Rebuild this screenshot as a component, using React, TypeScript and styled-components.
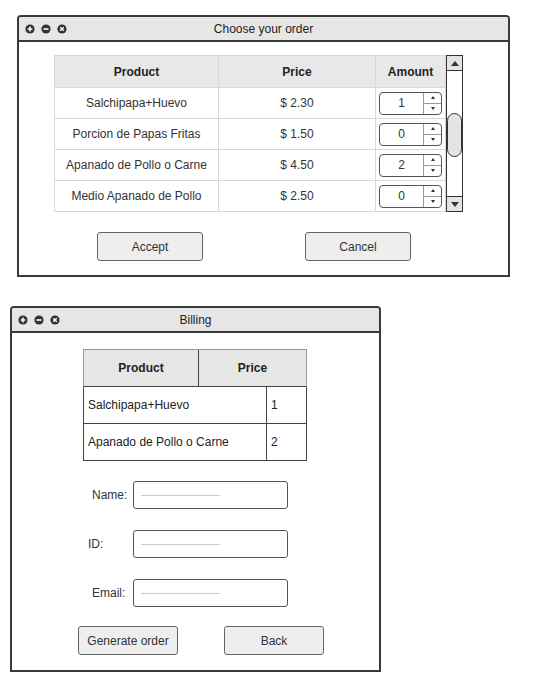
import React from "react";
import styled, { createGlobalStyle } from "styled-components";

const GlobalStyle = createGlobalStyle`
  body {
    margin: 0;
    background: #fff;
    font-family: "Liberation Sans", Arial, sans-serif;
    font-size: 12px;
    color: #333;
  }
`;

const Page = styled.div`
  display: flex;
  flex-direction: column;
  padding-top: 15px;
`;

const Window = styled.section<{ $left: number; $width: number; $height: number; $top?: number }>`
  box-sizing: border-box;
  margin-left: ${(p) => p.$left}px;
  margin-top: ${(p) => p.$top ?? 0}px;
  width: ${(p) => p.$width}px;
  height: ${(p) => p.$height}px;
  border: 2px solid #3a3a3a;
  border-radius: 4px 4px 0 0;
  display: flex;
  flex-direction: column;
  background: #fff;
`;

const TitleBar = styled.header`
  height: 23px;
  background: #e6e6e6;
  border-bottom: 2px solid #3a3a3a;
  border-radius: 2px 2px 0 0;
  display: grid;
  grid-template-columns: 1fr auto 1fr;
  align-items: center;
`;

const Controls = styled.div`
  display: flex;
  gap: 6px;
  padding-left: 6px;
`;

const Title = styled.span`
  color: #222;
  font-size: 12px;
`;

type ControlKind = "plus" | "minus" | "close";

function ControlDot({ kind }: { kind: ControlKind }) {
  return (
    <svg width="10" height="10" viewBox="0 0 10 10">
      <circle cx="5" cy="5" r="4.6" fill="#333" />
      {kind === "plus" && (
        <path d="M5 2.6V7.4M2.6 5H7.4" stroke="#fff" strokeWidth="1.5" />
      )}
      {kind === "minus" && <path d="M2.5 5H7.5" stroke="#fff" strokeWidth="1.6" />}
      {kind === "close" && (
        <path d="M3.2 3.2L6.8 6.8M6.8 3.2L3.2 6.8" stroke="#fff" strokeWidth="1.4" />
      )}
    </svg>
  );
}

function WindowHeader({ title }: { title: string }) {
  return (
    <TitleBar>
      <Controls>
        <ControlDot kind="plus" />
        <ControlDot kind="minus" />
        <ControlDot kind="close" />
      </Controls>
      <Title>{title}</Title>
      <span />
    </TitleBar>
  );
}

/* ---------- order window ---------- */

const OrderBody = styled.div`
  padding: 13px 0 0 35px;
  display: flex;
  flex-direction: column;
`;

const TableArea = styled.div`
  display: flex;
  align-items: flex-start;
`;

const OrderTable = styled.table`
  border-collapse: collapse;
  width: 388px;
  table-layout: fixed;
`;

const Th = styled.th<{ $w: number }>`
  width: ${(p) => p.$w}px;
  height: 31px;
  padding: 0;
  background: #e8e8e8;
  border: 1px solid #d8d8d8;
  font-weight: bold;
  font-size: 12px;
  color: #222;
  text-align: center;
`;

const Td = styled.td`
  height: 30px;
  padding: 0;
  border: 1px solid #d8d8d8;
  font-size: 12px;
  color: #333;
  text-align: center;
`;

const Spinner = styled.div`
  box-sizing: border-box;
  margin: 0 auto;
  width: 63px;
  height: 23px;
  border: 1px solid #555;
  border-radius: 4px;
  display: flex;
  background: #fff;
`;

const SpinValue = styled.span`
  flex: 1;
  display: flex;
  align-items: center;
  justify-content: center;
  color: #333;
`;

const SpinArrows = styled.div`
  width: 17px;
  border-left: 1px solid #999;
  display: flex;
  flex-direction: column;
`;

const SpinHalf = styled.div<{ $down?: boolean }>`
  flex: 1;
  display: flex;
  align-items: center;
  justify-content: center;
  border-top: ${(p) => (p.$down ? "1px solid #999" : "none")};
`;

const Tri = styled.span<{ $down?: boolean; $size: number }>`
  width: 0;
  height: 0;
  border-left: ${(p) => p.$size}px solid transparent;
  border-right: ${(p) => p.$size}px solid transparent;
  ${(p) =>
    p.$down
      ? `border-top: ${p.$size + 1}px solid #333;`
      : `border-bottom: ${p.$size + 1}px solid #333;`}
`;

function NumberSpinner({ value }: { value: number }) {
  return (
    <Spinner>
      <SpinValue>{value}</SpinValue>
      <SpinArrows>
        <SpinHalf>
          <Tri $size={2} />
        </SpinHalf>
        <SpinHalf $down>
          <Tri $size={2} $down />
        </SpinHalf>
      </SpinArrows>
    </Spinner>
  );
}

const ScrollBar = styled.div`
  box-sizing: border-box;
  width: 17px;
  height: 157px;
  border: 1px solid #333;
  display: flex;
  flex-direction: column;
  background: #fff;
`;

const ScrollButton = styled.div<{ $down?: boolean }>`
  height: 14px;
  background: #e4e4e4;
  display: flex;
  align-items: center;
  justify-content: center;
  border-bottom: ${(p) => (p.$down ? "none" : "1px solid #333")};
  border-top: ${(p) => (p.$down ? "1px solid #333" : "none")};
`;

const ScrollTrack = styled.div`
  flex: 1;
  display: flex;
  justify-content: center;
`;

const Thumb = styled.div`
  box-sizing: border-box;
  margin-top: 42px;
  width: 19px;
  height: 44px;
  border: 1px solid #333;
  border-radius: 9px;
  background: #e4e4e4;
`;

const ButtonRow = styled.div<{ $pad: number; $gap: number; $top: number }>`
  display: flex;
  gap: ${(p) => p.$gap}px;
  padding-left: ${(p) => p.$pad}px;
  margin-top: ${(p) => p.$top}px;
`;

const Button = styled.button<{ $w: number }>`
  box-sizing: border-box;
  width: ${(p) => p.$w}px;
  height: 29px;
  border: 1px solid #666;
  border-radius: 3px;
  background: #eee;
  font-family: "Liberation Sans", Arial, sans-serif;
  font-size: 12px;
  color: #333;
  padding: 0;
`;

const orders = [
  { name: "Salchipapa+Huevo", price: "$ 2.30", amount: 1 },
  { name: "Porcion de Papas Fritas", price: "$ 1.50", amount: 0 },
  { name: "Apanado de Pollo o Carne", price: "$ 4.50", amount: 2 },
  { name: "Medio Apanado de Pollo", price: "$ 2.50", amount: 0 },
];

function OrderWindow() {
  return (
    <Window $left={17} $width={493} $height={262}>
      <WindowHeader title="Choose your order" />
      <OrderBody>
        <TableArea>
          <OrderTable>
            <thead>
              <tr>
                <Th $w={163}>Product</Th>
                <Th $w={156}>Price</Th>
                <Th $w={69}>Amount</Th>
              </tr>
            </thead>
            <tbody>
              {orders.map((o) => (
                <tr key={o.name}>
                  <Td>{o.name}</Td>
                  <Td>{o.price}</Td>
                  <Td>
                    <NumberSpinner value={o.amount} />
                  </Td>
                </tr>
              ))}
            </tbody>
          </OrderTable>
          <ScrollBar>
            <ScrollButton>
              <Tri $size={4} />
            </ScrollButton>
            <ScrollTrack>
              <Thumb />
            </ScrollTrack>
            <ScrollButton $down>
              <Tri $size={4} $down />
            </ScrollButton>
          </ScrollBar>
        </TableArea>
        <ButtonRow $pad={43} $gap={102} $top={20}>
          <Button $w={106}>Accept</Button>
          <Button $w={106}>Cancel</Button>
        </ButtonRow>
      </OrderBody>
    </Window>
  );
}

/* ---------- billing window ---------- */

const BillingBody = styled.div`
  padding: 16px 0 0 71px;
  display: flex;
  flex-direction: column;
`;

const BillTable = styled.div`
  width: 224px;
  display: flex;
  flex-direction: column;
`;

const BillRow = styled.div<{ $cols: string; $head?: boolean }>`
  display: grid;
  grid-template-columns: ${(p) => p.$cols};
  height: 36px;
  background: ${(p) => (p.$head ? "#e6e6e6" : "#fff")};
  border: 1px solid ${(p) => (p.$head ? "#999" : "#444")};
  border-top: ${(p) => (p.$head ? "1px solid #999" : "none")};
  border-bottom-color: #444;
`;

const BillCell = styled.div<{ $head?: boolean }>`
  display: flex;
  align-items: center;
  justify-content: ${(p) => (p.$head ? "center" : "flex-start")};
  padding-left: ${(p) => (p.$head ? 0 : 4)}px;
  font-weight: ${(p) => (p.$head ? "bold" : "normal")};
  color: #222;
  & + & {
    border-left: 1px solid ${(p) => (p.$head ? "#bbb" : "#444")};
  }
`;

const Form = styled.div`
  display: flex;
  flex-direction: column;
  gap: 21px;
  margin-top: 20px;
`;

const FormRow = styled.div<{ $indent: number }>`
  display: flex;
  align-items: center;
  padding-left: ${(p) => p.$indent}px;
`;

const Label = styled.label<{ $w: number }>`
  width: ${(p) => p.$w}px;
  color: #333;
`;

const Field = styled.div`
  box-sizing: border-box;
  width: 155px;
  height: 28px;
  border: 1px solid #555;
  border-radius: 3px;
  display: flex;
  align-items: center;
  padding-left: 7px;
  &::before {
    content: "";
    width: 79px;
    height: 1px;
    background: #ccc;
  }
`;

const billing = [
  { name: "Salchipapa+Huevo", qty: 1 },
  { name: "Apanado de Pollo o Carne", qty: 2 },
];

const fields = [
  { label: "Name:", indent: 9, w: 41 },
  { label: "ID:", indent: 5, w: 45 },
  { label: "Email:", indent: 9, w: 41 },
];

function BillingWindow() {
  return (
    <Window $left={10} $width={371} $height={366} $top={29}>
      <WindowHeader title="Billing" />
      <BillingBody>
        <BillTable>
          <BillRow $cols="114px 1fr" $head>
            <BillCell $head>Product</BillCell>
            <BillCell $head>Price</BillCell>
          </BillRow>
          {billing.map((b) => (
            <BillRow key={b.name} $cols="182px 1fr">
              <BillCell>{b.name}</BillCell>
              <BillCell>{b.qty}</BillCell>
            </BillRow>
          ))}
        </BillTable>
        <Form>
          {fields.map((f) => (
            <FormRow key={f.label} $indent={f.indent}>
              <Label $w={f.w}>{f.label}</Label>
              <Field />
            </FormRow>
          ))}
        </Form>
        <ButtonRow $pad={0} $gap={46} $top={19} style={{ marginLeft: -5 }}>
          <Button $w={100}>Generate order</Button>
          <Button $w={100}>Back</Button>
        </ButtonRow>
      </BillingBody>
    </Window>
  );
}

export default function App() {
  return (
    <>
      <GlobalStyle />
      <Page>
        <OrderWindow />
        <BillingWindow />
      </Page>
    </>
  );
}
